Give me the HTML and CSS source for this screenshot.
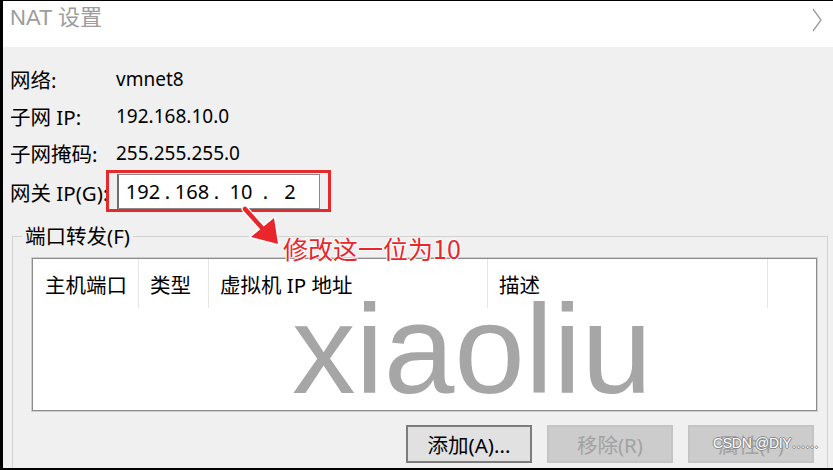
FILE: index.html
```html
<!DOCTYPE html>
<html lang="zh-CN">
<head>
<meta charset="utf-8">
<title>NAT 设置</title>
<link rel="stylesheet" href="styles.css">
</head>
<body>
<div class="frame">
  <header class="titlebar">
    <span class="title">NAT 设置</span>
    <svg class="chevron" width="12" height="24" viewBox="0 0 12 24"><polyline points="2,1 10,12 2,23" fill="none" stroke="#9a9a9a" stroke-width="1.3"/></svg>
  </header>
  <main class="dialog">
    <div class="info">
      <div class="row"><span class="label">网络:</span><span class="value">vmnet8</span></div>
      <div class="row"><span class="label">子网 IP:</span><span class="value">192.168.10.0</span></div>
      <div class="row"><span class="label">子网掩码:</span><span class="value">255.255.255.0</span></div>
      <div class="row gw">
        <span class="label">网关 IP(G):</span>
        <div class="ipbox">
          <span class="octet">192</span><span class="dot">.</span><span class="octet">168</span><span class="dot">.</span><span class="octet">10</span><span class="dot">.</span><span class="octet">2</span>
        </div>
      </div>
    </div>
    <fieldset class="group">
      <legend class="legend">端口转发(F)</legend>
      <div class="table">
        <div class="thead">
          <div class="th c1">主机端口</div>
          <div class="th c2">类型</div>
          <div class="th c3">虚拟机 IP 地址</div>
          <div class="th c4">描述</div>
          <div class="th c5"></div>
        </div>
      </div>
      <div class="buttons">
        <button class="btn">添加(A)...</button>
        <button class="btn disabled">移除(R)</button>
        <button class="btn disabled">属性(P)</button>
      </div>
    </fieldset>
  </main>

  <div class="highlight"></div>
  <svg class="arrow" width="42" height="44" viewBox="0 0 42 44">
    <line x1="5" y1="4" x2="23" y2="24" stroke="#fff" stroke-width="7" stroke-linecap="round"/>
    <polygon points="11,32 34,13 38,39" fill="#fff" stroke="#fff" stroke-width="3" stroke-linejoin="round"/>
    <line x1="5" y1="4" x2="23" y2="24" stroke="#e8262b" stroke-width="4.5" stroke-linecap="round"/>
    <polygon points="11,32 34,13 38,39" fill="#e8262b"/>
  </svg>
  <div class="note">修改这一位为10</div>
  <div class="watermark">xiaoliu</div>
  <div class="csdn">CSDN @DIY……</div>
</div>
</body>
</html>
```
FILE: styles.css
```css
html, body {
  margin: 0;
  padding: 0;
  background: #000;
}
.frame {
  position: relative;
  width: 833px;
  height: 470px;
  box-sizing: border-box;
  border-left: 3px solid #000;
  border-top: 1px solid #000;
  border-bottom: 2px solid #000;
  background: #f0f0f0;
  overflow: hidden;
  font-family: "Noto Sans", "Noto Sans CJK SC", sans-serif;
  color: #000;
}
.titlebar {
  height: 46px;
  box-sizing: border-box;
  background: #fff;
  display: flex;
  align-items: flex-start;
  justify-content: space-between;
  padding: 4px 10px 0 7px;
}
.title {
  font-size: 22px;
  line-height: 26px;
  color: #9c9c9c;
  font-family: "Liberation Sans", "Noto Sans CJK SC", sans-serif;
}
.chevron {
  margin-top: 3px;
}
.dialog {
  padding: 13px 0 0 7px;
}
.row {
  display: flex;
  align-items: center;
  height: 37px;
  font-size: 19px;
}
.label {
  width: 106px;
  flex: none;
  font-size: 20.5px;
}
.row.gw {
  height: 41px;
}
.ipbox {
  margin-left: 1px;
  width: 203px;
  height: 35px;
  box-sizing: border-box;
  background: #fff;
  border: 1px solid #8a8a8a;
  border-left: 2px solid #6e6e6e;
  display: flex;
  align-items: center;
  padding-left: 5px;
  font-size: 20px;
}
.octet {
  width: 38px;
  text-align: center;
}
.dot {
  width: 11px;
  text-align: center;
}
.group {
  margin: 12px 0 0 2px;
  width: 816px;
  box-sizing: border-box;
  border: 1px solid #d2d2d2;
  padding: 10px 10px 20px 19px;
}
.legend {
  font-size: 20.5px;
  line-height: 24px;
  padding: 0 3px;
  margin-left: -10px;
}
.table {
  height: 153px;
  box-sizing: border-box;
  background: #fff;
  border: 1px solid #8c8c8c;
  box-shadow: 0 0 0 1px #cfcfcf;
}
.thead {
  display: flex;
  height: 49px;
  font-size: 20.5px;
}
.th {
  box-sizing: border-box;
  padding-left: 11px;
  display: flex;
  align-items: center;
  border-right: 1px solid #e6e6e6;
}
.c1 { width: 106px; padding-left: 12px; }
.c2 { width: 70px; }
.c3 { width: 279px; }
.c4 { width: 280px; }
.c5 { flex: 1; border-right: none; }
.buttons {
  display: flex;
  justify-content: flex-end;
  gap: 15px;
  margin: 14px 3px 0 0;
}
.btn {
  width: 126px;
  height: 38px;
  box-sizing: border-box;
  background: #e1e1e1;
  border: 2px solid #7d7d7d;
  font-family: "Noto Sans", "Noto Sans CJK SC", sans-serif;
  font-size: 20.5px;
  color: #000;
  padding: 0;
}
.btn.disabled {
  background: #cccccc;
  border-color: #c4c4c4;
  color: #a2a2a2;
}
.highlight {
  position: absolute;
  left: 103px;
  top: 169px;
  width: 225px;
  height: 42px;
  box-sizing: border-box;
  border: 3px solid #e5292d;
}
.arrow {
  position: absolute;
  left: 237px;
  top: 204px;
}
.note {
  position: absolute;
  left: 280px;
  top: 233px;
  font-family: "Noto Sans CJK SC", sans-serif;
  font-size: 25px;
  line-height: 28px;
  color: #e8262b;
  white-space: nowrap;
  text-shadow: 1px 0 0 #fff, -1px 0 0 #fff, 0 1px 0 #fff, 0 -1px 0 #fff;
}
.watermark {
  position: absolute;
  left: 289px;
  top: 285px;
  font-family: "Liberation Sans", sans-serif;
  font-size: 127px;
  line-height: 1;
  color: #a6a6a6;
  white-space: nowrap;
}
.csdn {
  position: absolute;
  left: 710px;
  top: 433px;
  font-family: "Liberation Sans", sans-serif;
  font-size: 14px;
  line-height: 18px;
  letter-spacing: -0.3px;
  color: #fff;
  white-space: nowrap;
  text-shadow: 1px 0 0 #888, -1px 0 0 #888, 0 1px 0 #888, 0 -1px 0 #888;
}
```
